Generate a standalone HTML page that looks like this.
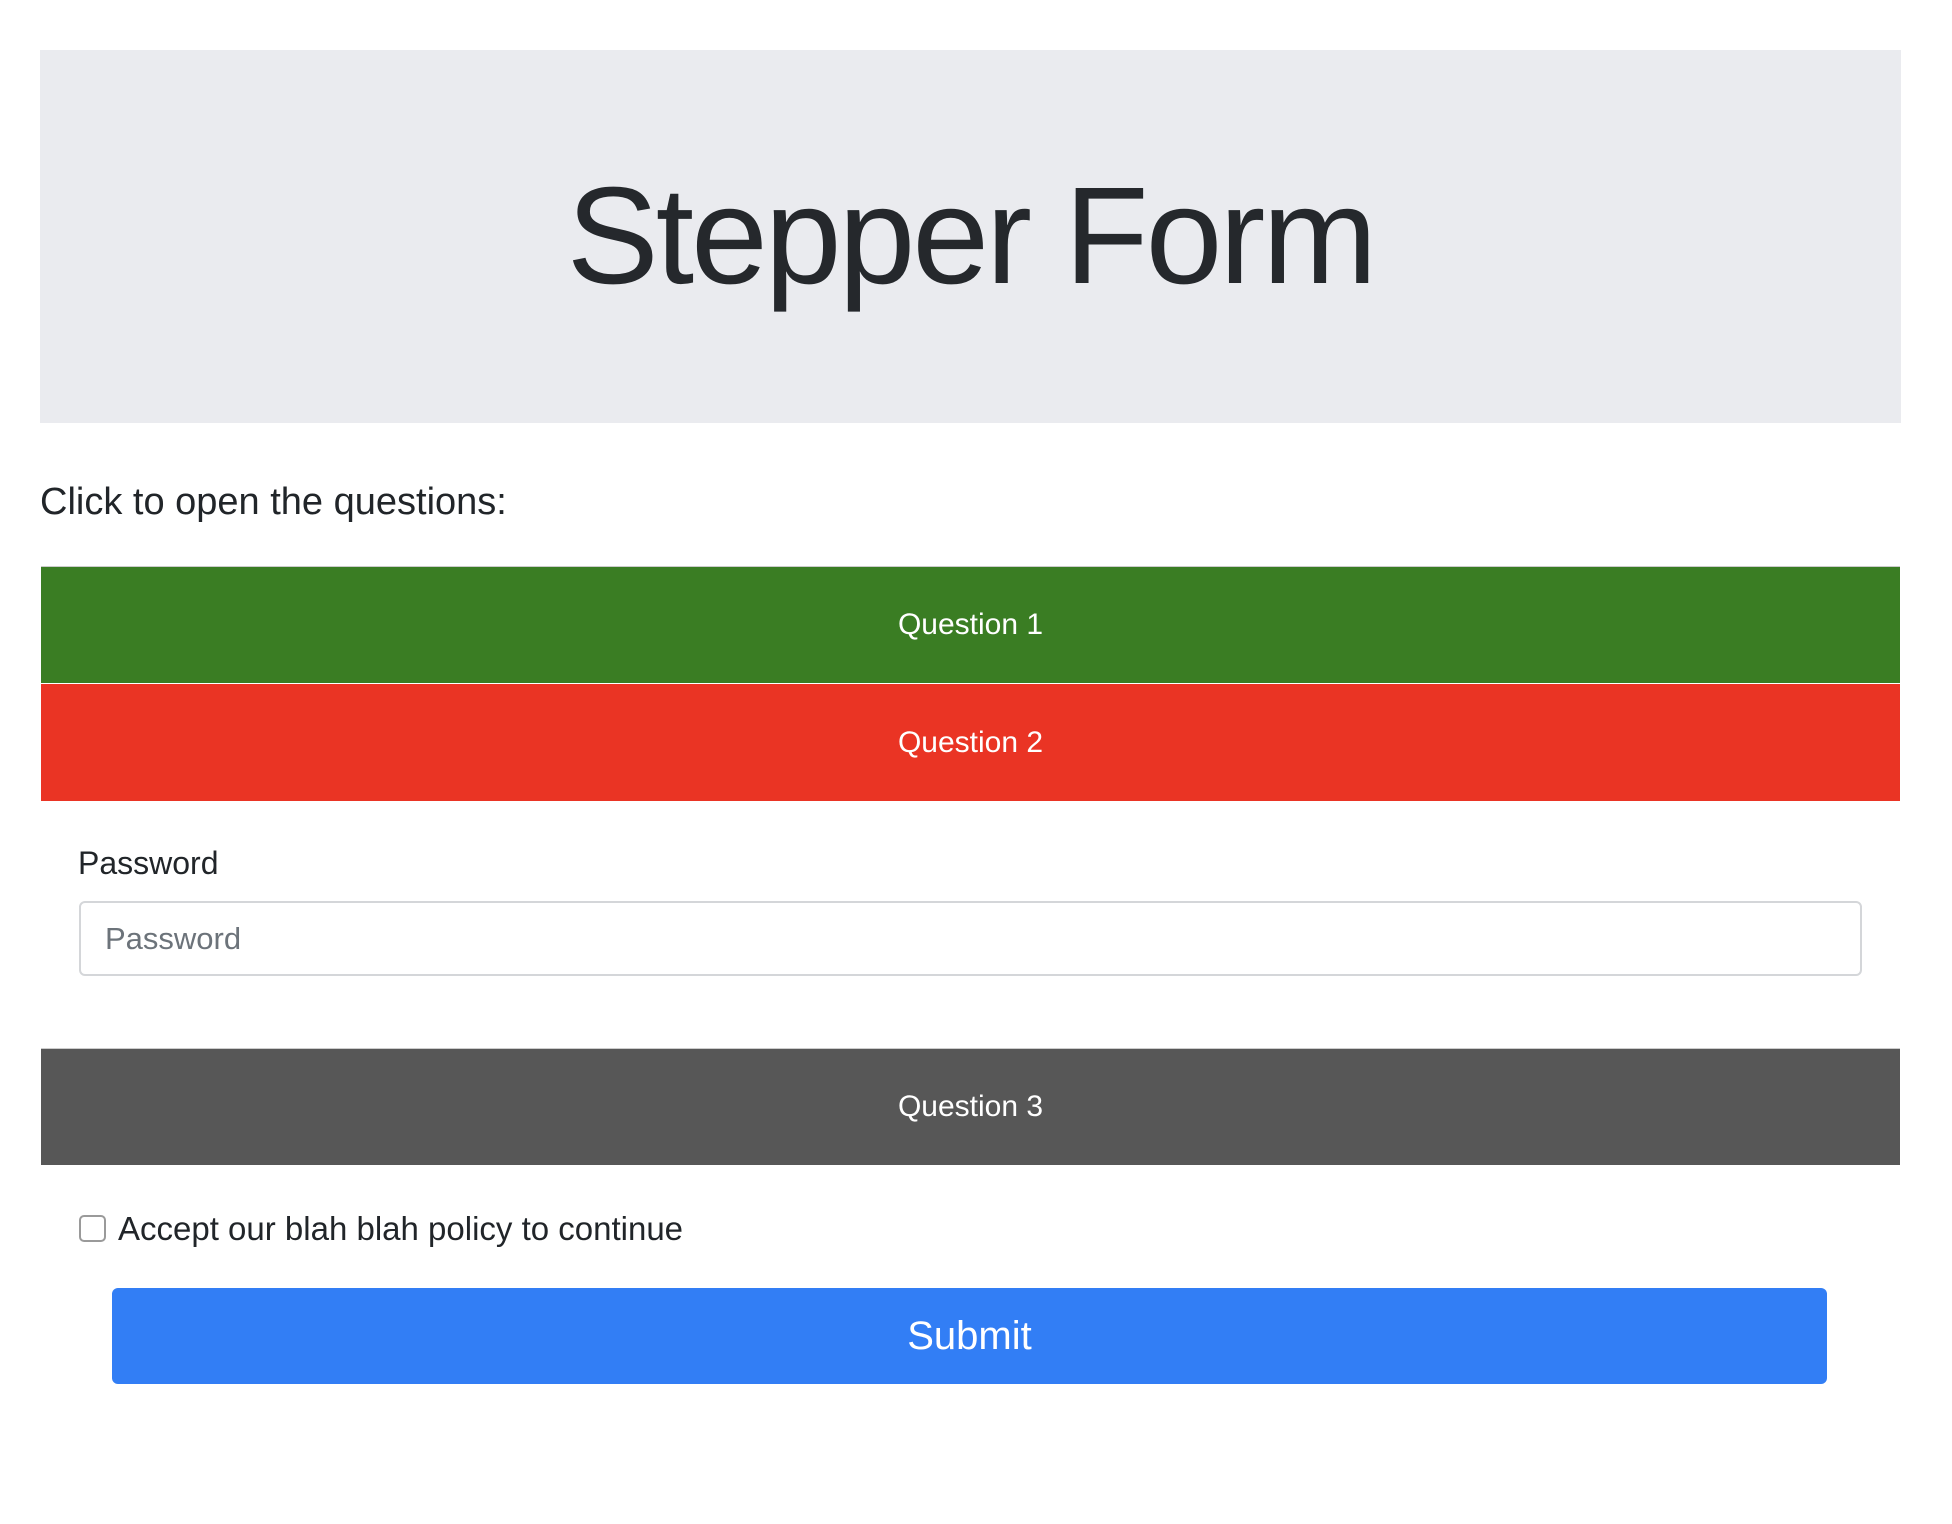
<!DOCTYPE html>
<html><head><style>
body{margin:0;width:1952px;height:1524px;background:#fff;font-family:"Liberation Sans",sans-serif;color:#212529;position:relative}
div{position:absolute;box-sizing:border-box}
.j{left:40px;top:50px;width:1861px;height:373px;background:#eaebef;display:flex;align-items:center;justify-content:center;font-size:138px;color:#25282c;letter-spacing:-3px}
.q{left:41px;width:1859px;height:117px;color:#fff;font-size:30px;display:flex;align-items:center;justify-content:center}
</style></head><body>
<div class="j">Stepper Form</div>
<div style="left:40px;top:481px;font-size:38px">Click to open the questions:</div>
<div class="q" style="top:566px;background:#3a7d23;border-top:1px solid #ccc">Question 1</div>
<div class="q" style="top:684px;background:#ea3424">Question 2</div>
<div style="left:78px;top:845px;font-size:32px">Password</div>
<div style="left:79px;top:901px;width:1783px;height:75px;border:2px solid #d4d6d9;border-radius:6px;font-size:31px;color:#6c737a;padding:18px 24px">Password</div>
<div class="q" style="top:1048px;background:#575757;border-top:1px solid #ccc">Question 3</div>
<div style="left:79px;top:1215px;width:27px;height:27px;border:2px solid #9a9a9a;border-radius:5px"></div>
<div style="left:118px;top:1210px;font-size:33px">Accept our blah blah policy to continue</div>
<div style="left:112px;top:1288px;width:1715px;height:96px;background:#327ef5;border-radius:6px;color:#fff;font-size:40px;display:flex;align-items:center;justify-content:center">Submit</div>
</body></html>
